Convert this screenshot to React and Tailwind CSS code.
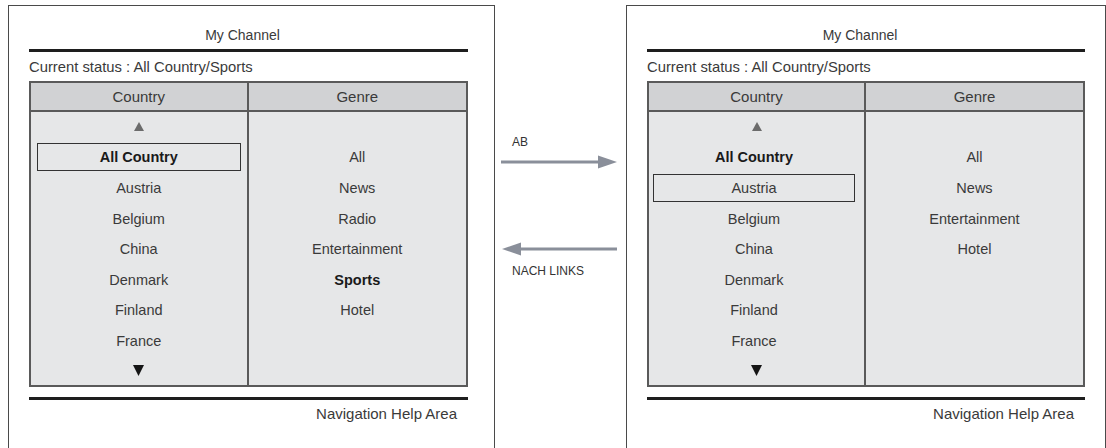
const countries = ["All Country", "Austria", "Belgium", "China", "Denmark", "Finland", "France"];

function UpTri() {
  return (
    <svg width="10" height="9" viewBox="0 0 10 9">
      <polygon points="5,0 10,9 0,9" fill="#6b6b6b" />
    </svg>
  );
}

function DownTri() {
  return (
    <svg width="11" height="11" viewBox="0 0 11 11">
      <polygon points="0,0 11,0 5.5,11" fill="#151515" />
    </svg>
  );
}

function Arrow({ dir }) {
  if (dir === "right") {
    return (
      <svg width="116" height="14" viewBox="0 0 116 14" className="block">
        <line x1="0" y1="7" x2="99" y2="7" stroke="#8a8f9a" strokeWidth="3" />
        <polygon points="97,0.5 116,7 97,13.5" fill="#8a8f9a" />
      </svg>
    );
  }
  return (
    <svg width="116" height="14" viewBox="0 0 116 14" className="block">
      <line x1="18" y1="7" x2="116" y2="7" stroke="#8a8f9a" strokeWidth="3" />
      <polygon points="20,0.5 1,7 20,13.5" fill="#8a8f9a" />
    </svg>
  );
}

function Panel({ width, inner, boxed, genres, boldGenre, boxInset }) {
  return (
    <div className={`${width} h-[470px] shrink-0 border border-[#4a4a4a] bg-white pl-[20px]`}>
      <div className={inner}>
        <div className="h-[43px] pt-[16px] pr-[12px] flex items-center justify-center text-[14px] text-[#3a3a3a]">
          My Channel
        </div>
        <div className="h-[3px] bg-[#1e1e1e]" />
        <div className="h-[29px] pt-[2px] flex items-center text-[14.8px] text-[#3a3a3a]">
          Current status : All Country/Sports
        </div>
        <div className="border-2 border-[#5a5a5a]">
          <div className="grid grid-cols-2 h-[29px] bg-[#d1d2d4] border-b-2 border-[#5a5a5a] text-[15px] text-[#3a3a3a]">
            <div className="flex items-center justify-center pt-[1px] border-r-2 border-[#5a5a5a]">Country</div>
            <div className="flex items-center justify-center pt-[1px]">Genre</div>
          </div>
          <div className="grid grid-cols-2 bg-[#e6e7e8] text-[14.5px] text-[#3a3a3a]">
            <div className="border-r-2 border-[#5a5a5a]">
              <div className="h-[28px] flex items-center justify-center">
                <UpTri />
              </div>
              {countries.map((c, i) => (
                <div key={c} className={`${i === 0 ? "h-[32.6px] pt-[2px]" : "h-[30.6px]"} flex items-center`}>
                  <div
                    className={`flex-1 h-[28px] pt-[2px] flex items-center justify-center ${boxInset} ${
                      i === boxed ? "border-[1.5px] border-[#333]" : ""
                    } ${i === 0 ? "font-bold text-[#1a1a1a]" : ""}`}
                  >
                    {c}
                  </div>
                </div>
              ))}
              <div className="h-[28.6px] flex items-center justify-center">
                <DownTri />
              </div>
            </div>
            <div>
              <div className="h-[30px]" />
              {genres.map((g) => (
                <div
                  key={g}
                  className={`h-[30.6px] pt-[2px] flex items-center justify-center ${
                    g === boldGenre ? "font-bold text-[#1a1a1a]" : ""
                  }`}
                >
                  {g}
                </div>
              ))}
            </div>
          </div>
        </div>
        <div className="mt-[10px] h-[3px] bg-[#1e1e1e]" />
        <div className="h-[28px] pt-[1px] flex items-center justify-end pr-[11px] text-[15px] text-[#3a3a3a]">
          Navigation Help Area
        </div>
      </div>
    </div>
  );
}

export default function App() {
  return (
    <div
      className="w-[1106px] h-[448px] overflow-hidden bg-white flex items-start pt-[5px] pl-[8px]"
      style={{ fontFamily: '"Liberation Sans", Arial, sans-serif' }}
    >
      <Panel
        width="w-[487px]"
        inner="w-[439px]"
        boxed={0}
        genres={["All", "News", "Radio", "Entertainment", "Sports", "Hotel"]}
        boldGenre="Sports"
        boxInset="ml-[6px] mr-[6px]"
      />
      <div className="w-[131px] shrink-0 pt-[130px] pl-[6px] text-[12px] text-[#333]">
        <div className="h-[14px] leading-[14px] pl-[11px]">AB</div>
        <div className="mt-[6px]">
          <Arrow dir="right" />
        </div>
        <div className="mt-[73px]">
          <Arrow dir="left" />
        </div>
        <div className="mt-[8px] h-[14px] leading-[14px] pl-[11px]">NACH LINKS</div>
      </div>
      <Panel
        width="w-[480px]"
        inner="w-[438px]"
        boxed={1}
        genres={["All", "News", "Entertainment", "Hotel"]}
        boldGenre=""
        boxInset="ml-[4px] mr-[9px]"
      />
    </div>
  );
}
